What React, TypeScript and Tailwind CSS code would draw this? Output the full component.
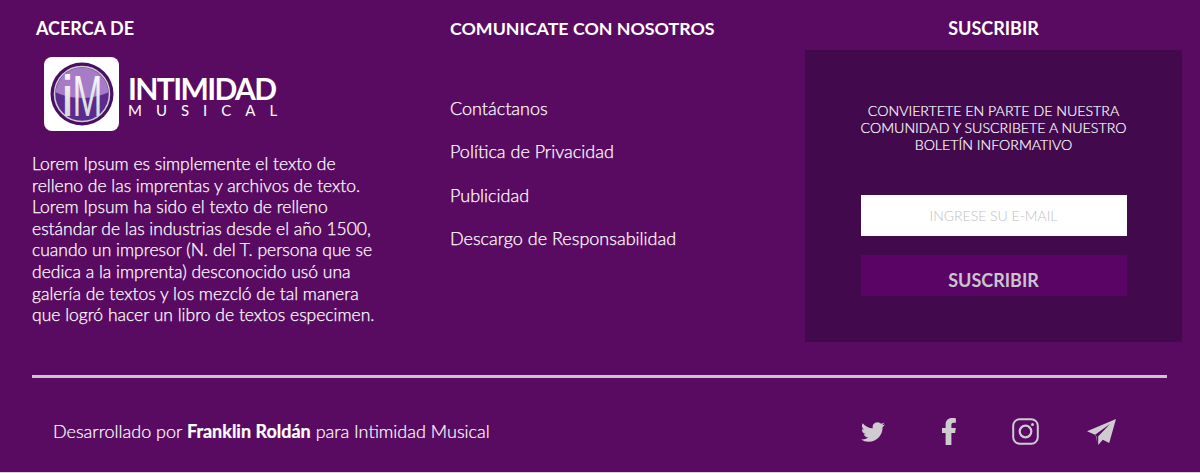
const BODY = [
  "Lorem Ipsum es simplemente el texto de",
  "relleno de las imprentas y archivos de texto.",
  "Lorem Ipsum ha sido el texto de relleno",
  "estándar de las industrias desde el año 1500,",
  "cuando un impresor (N. del T. persona que se",
  "dedica a la imprenta) desconocido usó una",
  "galería de textos y los mezcló de tal manera",
  "que logró hacer un libro de textos especimen.",
];

const LINKS = ["Contáctanos", "Política de Privacidad", "Publicidad", "Descargo de Responsabilidad"];

function Logo() {
  return (
    <div className="flex items-center ml-[12px] mt-[18px] h-[74px]">
      <div className="w-[75px] h-[74px] bg-white rounded-[8px] flex items-center justify-center">
        <svg width="64" height="64" viewBox="0 0 64 64">
          <defs>
            <clipPath id="inner">
              <circle cx="32" cy="32" r="26.5" />
            </clipPath>
            <linearGradient id="glyph" x1="0" y1="0" x2="0" y2="1">
              <stop offset="0" stopColor="#ffffff" />
              <stop offset="1" stopColor="#cfcfd4" />
            </linearGradient>
          </defs>
          <circle cx="32" cy="32" r="31.5" fill="#4a0f63" />
          <circle cx="32" cy="32" r="27.5" fill="#5a2a8c" stroke="#cfcdd6" strokeWidth="1.5" />
          <g clipPath="url(#inner)">
            <ellipse cx="32" cy="10" rx="42" ry="26" fill="#a67cc6" />
          </g>
          <g transform="translate(12.5 54) scale(0.62 1)">
            <text x="0" y="0" fontFamily="'Liberation Sans', sans-serif" fontSize="58" fill="url(#glyph)">
              <tspan fontWeight="700">i</tspan>M
            </text>
          </g>
        </svg>
      </div>
      <div className="ml-[9px] mt-[4px] flex flex-col text-white">
        <span className="text-[30px] leading-[29px] font-bold tracking-[-1.6px] whitespace-nowrap font-['Lato',sans-serif]">INTIMIDAD</span>
        <span className="text-[15px] leading-[15px] tracking-[14px] whitespace-nowrap font-['Lato',sans-serif] font-normal">MUSICAL</span>
      </div>
    </div>
  );
}

function SocialIcons() {
  return (
    <div className="flex items-center text-[#cfcbd1] pt-[12px]">
      <svg className="w-[24px] h-[24px] ml-[861px]" viewBox="0 0 24 24" fill="currentColor">
        <path d="M23.95 4.57a10 10 0 0 1-2.82.77 4.96 4.96 0 0 0 2.16-2.72c-.95.55-2 .95-3.12 1.18a4.92 4.92 0 0 0-8.38 4.48C7.69 8.09 4.07 6.13 1.64 3.16a4.82 4.82 0 0 0-.67 2.48c0 1.71.87 3.21 2.19 4.1a4.9 4.9 0 0 1-2.23-.62v.06a4.92 4.92 0 0 0 3.95 4.83 5 5 0 0 1-2.21.08 4.94 4.94 0 0 0 4.6 3.42A9.87 9.87 0 0 1 0 19.54a13.94 13.94 0 0 0 7.55 2.21c9.05 0 14-7.5 14-13.98 0-.21 0-.42-.02-.63a9.94 9.94 0 0 0 2.46-2.55z" />
      </svg>
      <svg className="w-[14px] h-[27px] ml-[57px]" viewBox="0 0 14 27" fill="currentColor">
        <path d="M3.6 27V15H0v-5h3.6V6.5C3.6 2.4 6.2 0 10 0c1.6 0 3 .1 3.9.2v4.5h-2.3C9.7 4.7 9.4 5.7 9.4 7.1V10h4.4l-.7 5H9.4v12z" />
      </svg>
      <svg className="w-[27px] h-[27px] ml-[56px]" viewBox="0 0 27 27" fill="none" stroke="currentColor">
        <rect x="1.2" y="1.2" width="24.6" height="24.6" rx="6.5" strokeWidth="2" />
        <circle cx="13.5" cy="13.5" r="5.8" strokeWidth="2.2" />
        <circle cx="20.5" cy="6.5" r="1.5" fill="currentColor" stroke="none" />
      </svg>
      <svg className="w-[29px] h-[26px] ml-[48px]" viewBox="0 0 29 26" fill="currentColor">
        <path d="M29 0 0 12.2l8 3.6L23 5 11.3 17.2l-.1.1V26l4.6-5.3 6.4 3.4z" />
        <path d="M9.4 17.4 8.8 16l-.3.1 1.9 8z" />
      </svg>
    </div>
  );
}

export default function App() {
  return (
    <div className="w-[1200px] h-[473px] overflow-hidden bg-[#590b62] text-white font-['Lato',sans-serif] border-b border-[#d4d4d4]">
      <div className="flex h-[342px] items-start">
        {/* Acerca de */}
        <div className="w-[418px] ml-[32px] shrink-0">
          <h3 className="ml-[4px] mt-[17px] text-[18px] leading-[22px] font-bold">ACERCA DE</h3>
          <Logo />
          <p className="mt-[22px] text-[17.5px] leading-[21.6px] font-light [-webkit-text-stroke:0.25px_white]">
            {BODY.map((line) => (
              <span key={line} className="block whitespace-nowrap">{line}</span>
            ))}
          </p>
        </div>

        {/* Comunicate */}
        <div className="w-[355px] shrink-0">
          <h3 className="mt-[17px] text-[17.8px] leading-[22px] font-bold">COMUNICATE CON NOSOTROS</h3>
          <ul className="mt-[58px] flex flex-col gap-[21.3px] text-[18px] leading-[22px] font-light [-webkit-text-stroke:0.25px_white]">
            {LINKS.map((link) => (
              <li key={link}>{link}</li>
            ))}
          </ul>
        </div>

        {/* Suscribir */}
        <div className="w-[377px] shrink-0">
          <h3 className="mt-[17px] text-[18px] leading-[22px] font-bold text-center">SUSCRIBIR</h3>
          <div className="mt-[11px] h-[292px] bg-[#43094d] flex flex-col items-center pt-[52px]">
            <p className="w-[290px] text-center text-[14.2px] leading-[17px] font-light [-webkit-text-stroke:0.2px_white]">
              CONVIERTETE EN PARTE DE NUESTRA COMUNIDAD Y SUSCRIBETE A NUESTRO BOLETÍN INFORMATIVO
            </p>
            <div className="mt-[42px] w-[266px] h-[41px] bg-white flex items-center justify-center text-[14px] font-light text-[#c0c0c0]">
              INGRESE SU E-MAIL
            </div>
            <div className="mt-[19px] w-[266px] h-[41px] bg-[#5a0466] flex items-center justify-center text-[18px] font-bold text-[#c9c5cc] pt-[9px]">
              SUSCRIBIR
            </div>
          </div>
        </div>
      </div>

      <div className="mt-[33px] ml-[32px] w-[1135px] h-[3px] bg-[#cdc6cf]" />

      <div className="relative h-[95px] flex items-center">
        <p className="absolute left-[53px] top-[42px] text-[18px] leading-[22px] font-light whitespace-nowrap [-webkit-text-stroke:0.2px_white]">
          Desarrollado por <span className="font-bold">Franklin Roldán</span> para Intimidad Musical
        </p>
        <SocialIcons />
      </div>
    </div>
  );
}
